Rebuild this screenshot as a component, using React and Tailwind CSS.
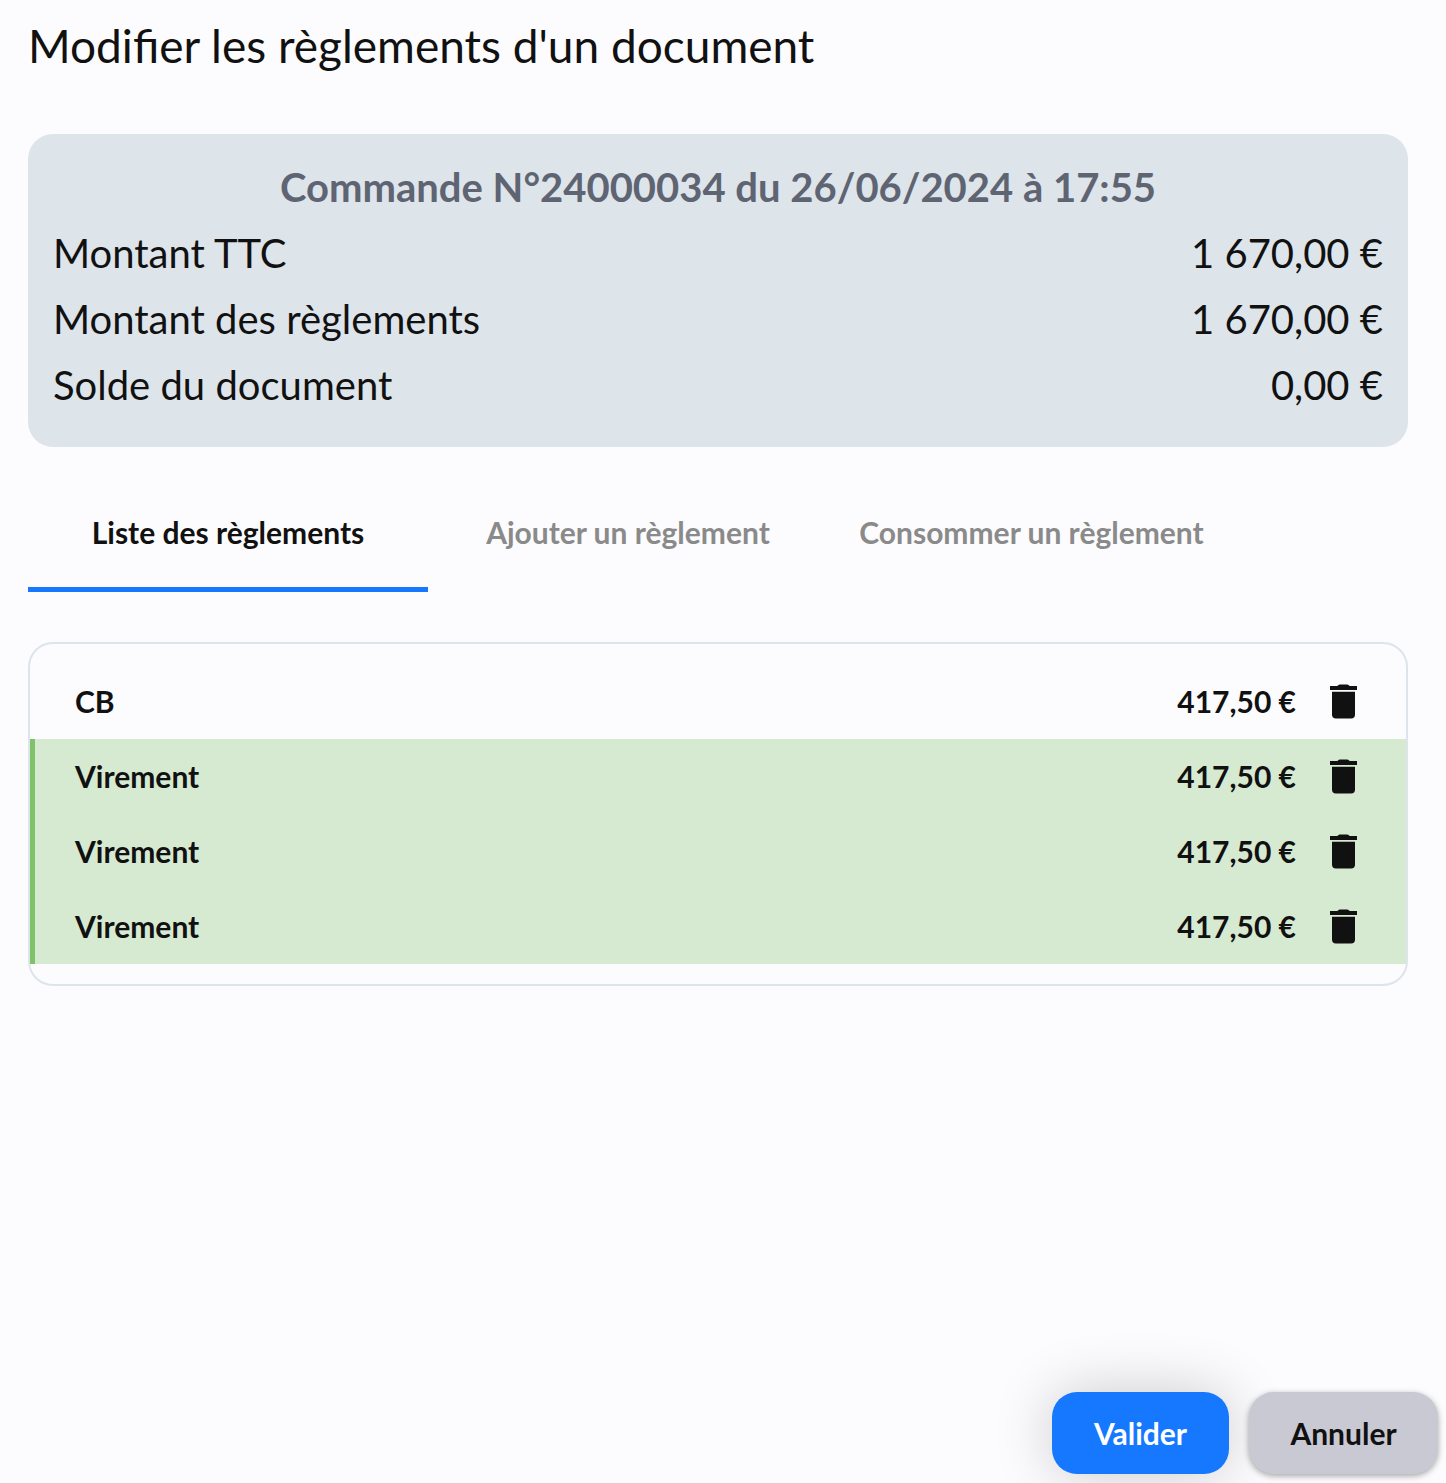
const payments = ["CB", "Virement", "Virement", "Virement"];

const totals = [
  ["Montant TTC", "1 670,00 €"],
  ["Montant des règlements", "1 670,00 €"],
  ["Solde du document", "0,00 €"],
];

function TrashIcon() {
  return (
    <svg viewBox="0 0 27 35" className="h-[35px] w-[27px]" fill="currentColor" aria-hidden="true">
      <path d="M0 2H7.300L8.500.900Q9 .400 9.700.400H17.300Q18 .400 18.500.900L19.700 2H27V6H0Z" />
      <path d="M2 7.800H25V30.500Q25 34.500 21 34.500H6Q2 34.500 2 30.500Z" />
    </svg>
  );
}

export default function App() {
  return (
    <div className="flex min-h-screen flex-col bg-[#fcfcfe] font-['Lato',sans-serif] text-[#111111]">
      <main className="flex-1 pr-[38px] pl-7">
        <h1 className="pt-4 text-[46px] leading-[60px]">Modifier les règlements d'un document</h1>

        <section className="mt-[58px] rounded-[25px] bg-[#dde4ea] px-[25px] pt-5 pb-[29px]">
          <h2 className="text-center text-[40px] leading-[66px] font-bold text-[#5f6473]">
            Commande N°24000034 du 26/06/2024 à 17:55
          </h2>
          <dl>
            {totals.map(([label, value]) => (
              <div key={label} className="flex justify-between text-[40px] leading-[66px]">
                <dt>{label}</dt>
                <dd>{value}</dd>
              </div>
            ))}
          </dl>
        </section>

        <div role="tablist" className="mt-7 flex text-[30px] leading-[36px] font-bold">
          <button role="tab" aria-selected="true" className="h-[117px] w-[400px] border-b-[5px] border-[#1677ff] pt-0.5">
            Liste des règlements
          </button>
          <button role="tab" aria-selected="false" className="h-[117px] w-[400px] border-b-[5px] border-transparent pt-0.5 text-[#8a8a8a]">
            Ajouter un règlement
          </button>
          <button role="tab" aria-selected="false" className="h-[117px] w-[407px] border-b-[5px] border-transparent pt-0.5 text-[#8a8a8a]">
            Consommer un règlement
          </button>
        </div>

        <ul className="mt-[50px] rounded-[25px] border-2 border-[#dde4ea] py-5 text-[30px] font-bold">
          {payments.map((label, i) => (
            <li
              key={i}
              className={
                "flex h-[75px] items-center border-l-[5px] pr-[49px] pl-10 " +
                (i === 0 ? "border-transparent" : "border-[#80c269] bg-[#d6ead1]")
              }
            >
              <span className="flex-1">{label}</span>
              <span>417,50 €</span>
              <button aria-label={"Supprimer " + label} className="ml-[34px]">
                <TrashIcon />
              </button>
            </li>
          ))}
        </ul>
      </main>

      <footer className="flex justify-end gap-5 pr-2 pb-[9px] text-[30px] font-bold">
        <button className="h-[82px] w-[177px] rounded-[25px] bg-[#1677ff] text-white shadow-[0_0_60px_rgba(0,0,0,0.2)]">Valider</button>
        <button className="h-[82px] w-[189px] rounded-[25px] bg-[#c9c9d3] shadow-[0_2px_6px_rgba(0,0,0,0.35)]">Annuler</button>
      </footer>
    </div>
  );
}
